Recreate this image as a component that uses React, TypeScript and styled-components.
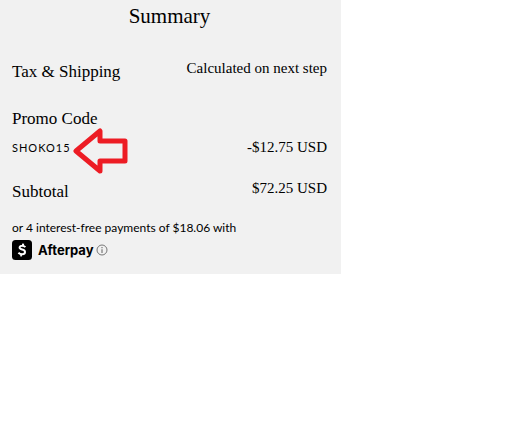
import React from "react";
import styled, { createGlobalStyle } from "styled-components";

const GlobalStyle = createGlobalStyle`
  body {
    margin: 0;
    background: #ffffff;
    color: #000000;
    font-family: "Liberation Serif", serif;
  }
`;

const Panel = styled.section`
  box-sizing: border-box;
  width: 100%;
  max-width: 341px;
  padding: 3px 14px 13px 12px;
  background: #f1f1f1;
`;

const Title = styled.h2`
  margin: 0 0 31px;
  font-size: 21px;
  line-height: 26px;
  font-weight: 400;
  text-align: center;
`;

const List = styled.dl`
  margin: 0;
  display: flex;
  flex-direction: column;
  gap: 23px;
`;

const Row = styled.div<{ $align?: "start" | "last" }>`
  display: flex;
  justify-content: space-between;
  align-items: ${({ $align }) => ($align === "last" ? "last baseline" : "flex-start")};
`;

const Label = styled.dt`
  font-size: 17px;
  line-height: 24px;
`;

const Value = styled.dd`
  margin: 0;
  font-size: 15px;
  line-height: 16px;
`;

const Code = styled.span`
  position: relative;
  display: block;
  width: max-content;
  margin: 9px 0 1px;
  font-family: Lato, sans-serif;
  font-size: 11px;
  line-height: 16px;
  letter-spacing: 1px;
`;

const Arrow = styled.svg`
  position: absolute;
  left: 61px;
  top: -12px;
  width: 56px;
  height: 46px;
`;

const Installments = styled.footer`
  margin-top: 16px;
  font-family: Lato, sans-serif;
`;

const InstallmentText = styled.p`
  margin: 0;
  font-size: 12px;
  line-height: 16px;
`;

const Provider = styled.div`
  display: flex;
  align-items: center;
  margin-top: 4px;
  height: 20px;
  padding-bottom: 1px;
`;

const Brand = styled.span`
  margin: 0 2px 0 6px;
  font-family: Inter, sans-serif;
  font-size: 13px;
  line-height: 20px;
  font-weight: 700;
`;

const InfoButton = styled.button`
  display: flex;
  padding: 0;
  border: 0;
  background: none;
  cursor: pointer;
`;

export default function App() {
  return (
    <>
      <GlobalStyle />
      <Panel>
        <Title>Summary</Title>
        <List>
          <Row>
            <Label>Tax &amp; Shipping</Label>
            <Value>Calculated on next step</Value>
          </Row>
          <Row $align="last">
            <Label>
              Promo Code
              <Code>
                SHOKO15
                <Arrow viewBox="0 0 56 46" aria-hidden="true">
                  <path
                    d="M3 23 L27 3 V13 H52 V33 H27 V43 Z"
                    fill="none"
                    stroke="#ed1c24"
                    strokeWidth="5"
                    strokeLinejoin="round"
                  />
                </Arrow>
              </Code>
            </Label>
            <Value>-$12.75 USD</Value>
          </Row>
          <Row>
            <Label>Subtotal</Label>
            <Value>$72.25 USD</Value>
          </Row>
        </List>
        <Installments>
          <InstallmentText>or 4 interest-free payments of $18.06 with</InstallmentText>
          <Provider>
            <svg width="20" height="20" viewBox="0 0 20 20" aria-hidden="true">
              <rect width="20" height="20" rx="3.5" fill="#000" />
              <path
                d="M13.4 7.1C12.5 6.2 11.3 5.7 10 5.7C8.6 5.7 7.6 6.4 7.6 7.5C7.6 8.8 8.8 9.2 10.2 9.5C11.9 9.9 13 10.5 13 12C13 13.4 11.8 14.3 10.1 14.3C8.6 14.3 7.3 13.7 6.4 12.8M11.2 3.6L10.8 5.7M9.3 14.3L8.9 16.4"
                fill="none"
                stroke="#fff"
                strokeWidth="2"
              />
            </svg>
            <Brand>Afterpay</Brand>
            <InfoButton type="button" aria-label="Afterpay information">
              <svg width="12" height="12" viewBox="0 0 12 12" aria-hidden="true">
                <circle cx="6" cy="6" r="5" fill="none" stroke="#777" />
                <path d="M6 3V4.2M6 5.2V9" stroke="#777" strokeWidth="1.2" />
              </svg>
            </InfoButton>
          </Provider>
        </Installments>
      </Panel>
    </>
  );
}
